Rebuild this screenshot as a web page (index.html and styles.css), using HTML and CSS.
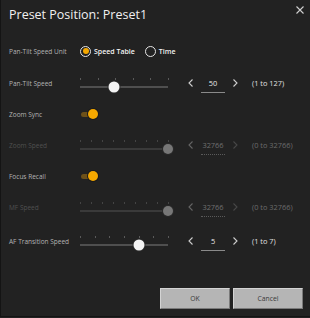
FILE: index.html
```html
<!DOCTYPE html>
<html>
<head>
<meta charset="utf-8">
<link rel="stylesheet" href="styles.css">
</head>
<body>
<div class="dialog">
  <header class="head">
    <h1 class="title">Preset Position: Preset1</h1>
    <button class="close" aria-label="Close">
      <svg width="8" height="8" viewBox="0 0 8 8"><path d="M0.5 0.5 L7.5 7.5 M7.5 0.5 L0.5 7.5" stroke="#d0d0d0" stroke-width="1.1" fill="none"/></svg>
    </button>
  </header>
  <div class="form">
    <div class="row row-radio">
      <span class="label">Pan-Tilt Speed Unit</span>
      <div class="radios">
        <label class="radio on"><span class="dot"></span>Speed Table</label>
        <label class="radio"><span class="dot"></span>Time</label>
      </div>
    </div>
    <div class="row row-slider">
      <span class="label">Pan-Tilt Speed</span>
      <div class="slider">
        <div class="ticks"><i></i><i></i><i></i><i></i><i></i><i></i></div>
        <div class="track"><span class="knob" style="left:38.9%"></span></div>
      </div>
      <div class="stepper">
        <svg class="chev" width="10" height="10" viewBox="0 0 10 10"><path d="M6.5 1.5 L3 5 L6.5 8.5" stroke="#cfcfcf" stroke-width="1.1" fill="none"/></svg>
        <span class="value">50</span>
        <svg class="chev" width="10" height="10" viewBox="0 0 10 10"><path d="M3.5 1.5 L7 5 L3.5 8.5" stroke="#cfcfcf" stroke-width="1.1" fill="none"/></svg>
      </div>
      <span class="range">(1 to 127)</span>
    </div>
    <div class="row row-toggle">
      <span class="label">Zoom Sync</span>
      <span class="toggle"><span class="tknob"></span></span>
    </div>
    <div class="row row-slider disabled">
      <span class="label">Zoom Speed</span>
      <div class="slider">
        <div class="ticks"><i></i><i></i><i></i><i></i><i></i><i></i><i></i><i></i><i></i></div>
        <div class="track"><span class="knob" style="left:100%"></span></div>
      </div>
      <div class="stepper">
        <svg class="chev" width="10" height="10" viewBox="0 0 10 10"><path d="M6.5 1.5 L3 5 L6.5 8.5" stroke="#666" stroke-width="1.1" fill="none"/></svg>
        <span class="value">32766</span>
        <svg class="chev" width="10" height="10" viewBox="0 0 10 10"><path d="M3.5 1.5 L7 5 L3.5 8.5" stroke="#484848" stroke-width="1.1" fill="none"/></svg>
      </div>
      <span class="range">(0 to 32766)</span>
    </div>
    <div class="row row-toggle">
      <span class="label">Focus Recall</span>
      <span class="toggle"><span class="tknob"></span></span>
    </div>
    <div class="row row-slider disabled">
      <span class="label">MF Speed</span>
      <div class="slider">
        <div class="ticks"><i></i><i></i><i></i><i></i><i></i><i></i><i></i><i></i><i></i></div>
        <div class="track"><span class="knob" style="left:100%"></span></div>
      </div>
      <div class="stepper">
        <svg class="chev" width="10" height="10" viewBox="0 0 10 10"><path d="M6.5 1.5 L3 5 L6.5 8.5" stroke="#666" stroke-width="1.1" fill="none"/></svg>
        <span class="value">32766</span>
        <svg class="chev" width="10" height="10" viewBox="0 0 10 10"><path d="M3.5 1.5 L7 5 L3.5 8.5" stroke="#484848" stroke-width="1.1" fill="none"/></svg>
      </div>
      <span class="range">(0 to 32766)</span>
    </div>
    <div class="row row-slider row-last">
      <span class="label">AF Transition Speed</span>
      <div class="slider">
        <div class="ticks"><i></i><i></i><i></i><i></i><i></i><i></i><i></i></div>
        <div class="track"><span class="knob" style="left:66.7%"></span></div>
      </div>
      <div class="stepper">
        <svg class="chev" width="10" height="10" viewBox="0 0 10 10"><path d="M6.5 1.5 L3 5 L6.5 8.5" stroke="#cfcfcf" stroke-width="1.1" fill="none"/></svg>
        <span class="value">5</span>
        <svg class="chev" width="10" height="10" viewBox="0 0 10 10"><path d="M3.5 1.5 L7 5 L3.5 8.5" stroke="#cfcfcf" stroke-width="1.1" fill="none"/></svg>
      </div>
      <span class="range">(1 to 7)</span>
    </div>
  </div>
  <footer class="actions">
    <button class="btn">OK</button>
    <button class="btn">Cancel</button>
  </footer>
</div>
</body>
</html>
```

FILE: styles.css
```css
* { box-sizing: border-box; }
html, body { margin: 0; padding: 0; background: #222222; }
body { width: 310px; height: 318px; overflow: hidden; font-family: "Open Sans", "Noto Sans", sans-serif; }

.dialog {
  width: 310px;
  height: 317px;
  background: #222222;
  border-left: 1px solid #141414;
  border-bottom: 1px solid #141414;
  display: flex;
  flex-direction: column;
}

.head {
  display: flex;
  justify-content: space-between;
  align-items: flex-start;
  height: 35px;
  padding: 0 0 0 8px;
}
.title {
  margin: 0;
  margin-top: 7px;
  font-size: 12.5px;
  font-weight: 400;
  color: #f0f0f0;
  line-height: 16px;
  letter-spacing: 0;
}
.close {
  background: none;
  border: 0;
  padding: 0;
  margin: 6px 6px 0 0;
  width: 8px;
  height: 8px;
  display: flex;
}

.form { display: flex; flex-direction: column; padding-left: 8px; }
.row { display: flex; align-items: center; height: 32px; }
.row-toggle { height: 30px; }
.row-last { height: 34px; padding-top: 2px; }

.label {
  width: 71px;
  flex: none;
  font-size: 6.5px;
  color: #b4b4b4;
  white-space: nowrap;
}
.disabled .label { color: #505050; }

.radios { display: flex; align-items: center; gap: 10px; }
.radio {
  display: flex;
  align-items: center;
  gap: 3px;
  font-size: 7px;
  font-weight: 600;
  color: #f2f2f2;
}
.dot {
  width: 11px;
  height: 11px;
  border-radius: 50%;
  border: 1.3px solid #e6e6e6;
  display: flex;
  align-items: center;
  justify-content: center;
}
.radio.on .dot::after {
  content: "";
  width: 6px;
  height: 6px;
  border-radius: 50%;
  background: #f5a800;
}

.slider {
  width: 89px;
  flex: none;
  height: 10px;
  display: flex;
  flex-direction: column;
  justify-content: space-between;
}
.ticks { display: flex; justify-content: space-between; height: 2px; }
.ticks i { width: 1px; height: 2px; background: #5a5a5a; }
.disabled .ticks i { background: #444; }
.track { position: relative; height: 2px; background: #4f4f4f; width: 88px; }
.disabled .track { background: #3a3a3a; }
.knob {
  position: absolute;
  top: 50%;
  width: 11px;
  height: 11px;
  border-radius: 50%;
  background: #f4f4f4;
  transform: translate(-50%, -50%);
  box-shadow: 0 0 0 1px #2a2a2a;
}
.disabled .knob { background: #777; width: 10px; height: 10px; }

.stepper {
  display: flex;
  align-items: center;
  margin-left: 17px;
  gap: 5px;
}
.chev { display: block; }
.value {
  width: 24px;
  text-align: center;
  font-size: 7.4px;
  line-height: 10px;
  color: #e8e8e8;
  padding: 4px 0 4px;
  border-bottom: 1px solid #8a8a8a;
  margin-top: 1px;
}
.disabled .value { color: #707070; border-bottom: 1px dotted #5a5a5a; }

.range { margin-left: 12px; font-size: 7.4px; color: #e0e0e0; white-space: nowrap; }
.disabled .range { color: #6c6c6c; }

.toggle {
  position: relative;
  width: 17px;
  height: 10px;
  margin-left: 1px;
  display: flex;
  align-items: center;
}
.toggle::before {
  content: "";
  width: 12px;
  height: 5px;
  border-radius: 3px;
  background: #6e5119;
}
.tknob {
  position: absolute;
  right: 0;
  top: 0;
  width: 10px;
  height: 10px;
  border-radius: 50%;
  background: #f5a800;
  box-shadow: 0 0 0 1px #1a1a1a;
}

.actions {
  margin-top: auto;
  display: flex;
  justify-content: flex-end;
  gap: 3px;
  padding: 0 7px 7px 0;
}
.btn {
  width: 70px;
  height: 21px;
  background: #b5b5b5;
  border: 1px solid;
  border-color: #d4d4d4 #7a7a7a #7a7a7a #d4d4d4;
  font-family: "Open Sans", "Noto Sans", sans-serif;
  font-size: 6.8px;
  color: #3a3a3a;
  padding: 0;
}
```
